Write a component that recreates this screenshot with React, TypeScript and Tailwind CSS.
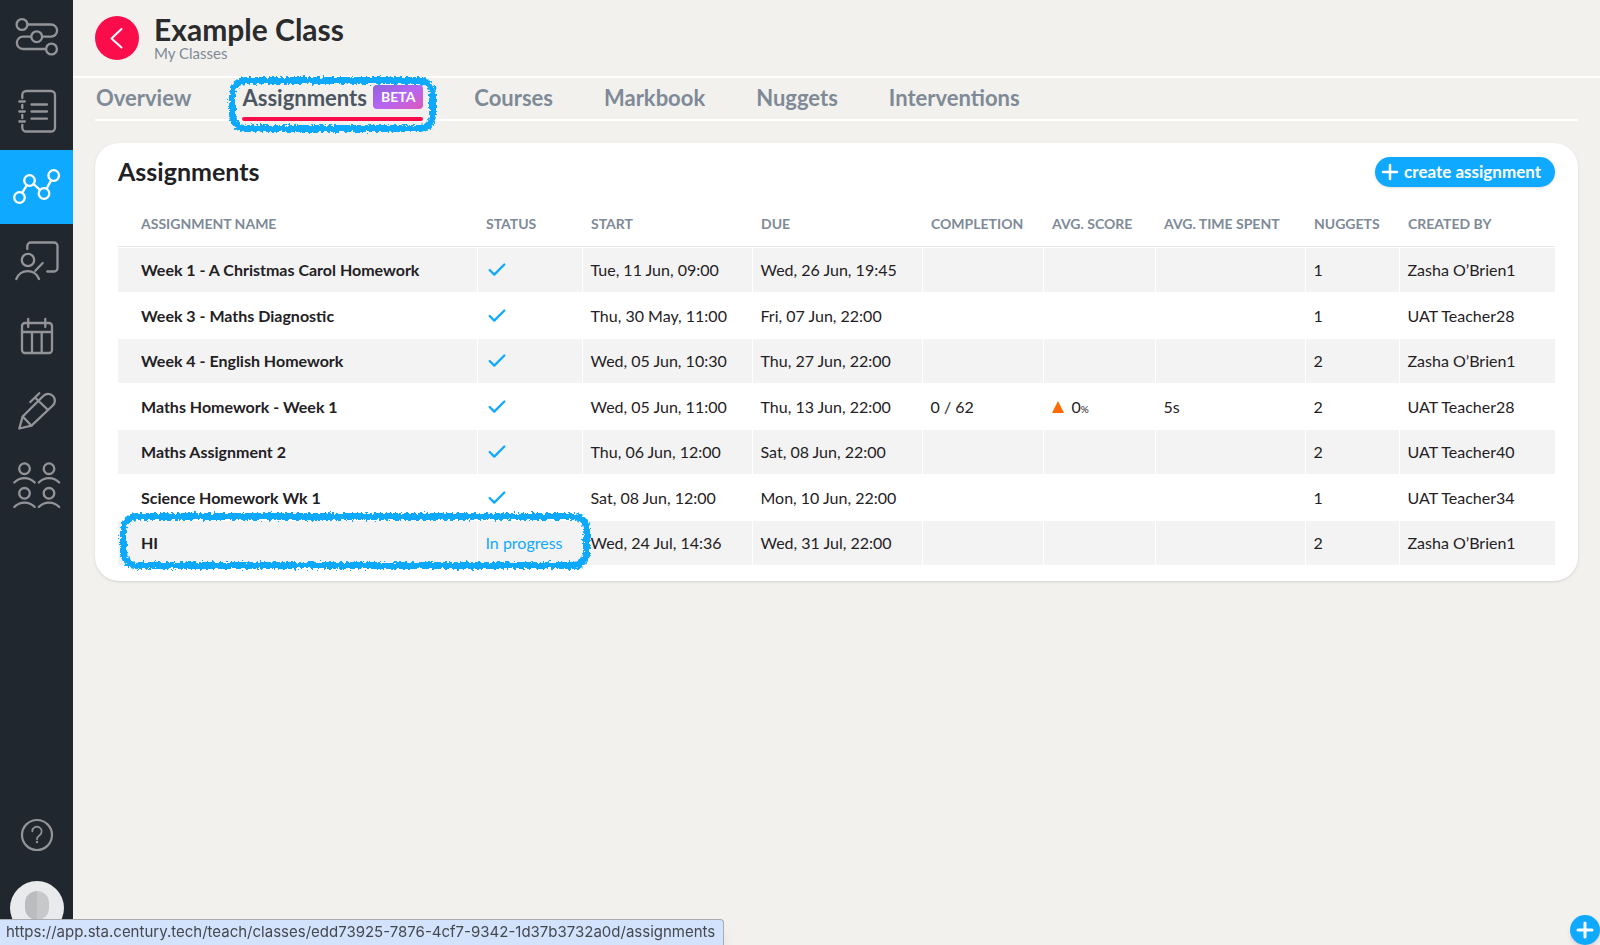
import React from 'react';
import { Check, Plus } from 'lucide-react';
import clsx from 'clsx';

interface Assignment {
  name: string;
  done: boolean;
  start: string;
  due: string;
  completion?: string;
  score?: number;
  time?: string;
  nuggets: number;
  author: string;
}

const ASSIGNMENTS: Assignment[] = [
  { name: 'Week 1 - A Christmas Carol Homework', done: true, start: 'Tue, 11 Jun, 09:00', due: 'Wed, 26 Jun, 19:45', nuggets: 1, author: 'Zasha O’Brien1' },
  { name: 'Week 3 - Maths Diagnostic', done: true, start: 'Thu, 30 May, 11:00', due: 'Fri, 07 Jun, 22:00', nuggets: 1, author: 'UAT Teacher28' },
  { name: 'Week 4 - English Homework', done: true, start: 'Wed, 05 Jun, 10:30', due: 'Thu, 27 Jun, 22:00', nuggets: 2, author: 'Zasha O’Brien1' },
  { name: 'Maths Homework - Week 1', done: true, start: 'Wed, 05 Jun, 11:00', due: 'Thu, 13 Jun, 22:00', completion: '0 / 62', score: 0, time: '5s', nuggets: 2, author: 'UAT Teacher28' },
  { name: 'Maths Assignment 2', done: true, start: 'Thu, 06 Jun, 12:00', due: 'Sat, 08 Jun, 22:00', nuggets: 2, author: 'UAT Teacher40' },
  { name: 'Science Homework Wk 1', done: true, start: 'Sat, 08 Jun, 12:00', due: 'Mon, 10 Jun, 22:00', nuggets: 1, author: 'UAT Teacher34' },
  { name: 'HI', done: false, start: 'Wed, 24 Jul, 14:36', due: 'Wed, 31 Jul, 22:00', nuggets: 2, author: 'Zasha O’Brien1' },
];

const COLUMNS = [
  { label: 'Assignment name', width: '' },
  { label: 'Status', width: 'w-[105px]' },
  { label: 'Start', width: 'w-[170px]' },
  { label: 'Due', width: 'w-[170px]' },
  { label: 'Completion', width: 'w-[121px]' },
  { label: 'Avg. score', width: 'w-[112px]' },
  { label: 'Avg. time spent', width: 'w-[150px]' },
  { label: 'Nuggets', width: 'w-[94px]' },
  { label: 'Created by', width: 'w-[156px]' },
];

const TABS = ['Overview', 'Assignments', 'Courses', 'Markbook', 'Nuggets', 'Interventions'];

// Each icon is drawn in a 74x74 box, the size of its navigation button.
const NAV = [
  {
    label: 'Pathways',
    icon: (
      <>
        <circle cx="22" cy="24.5" r="5.4" />
        <circle cx="36.7" cy="36.7" r="5.4" />
        <circle cx="51.5" cy="49" r="5.4" />
        <path d="M27.5 24.5H51a6.1 6.1 0 0 1 0 12.2h-8.8M31.2 36.7H23A6.1 6.1 0 0 0 23 49h23" />
      </>
    ),
  },
  {
    label: 'Courses',
    icon: (
      <>
        <path d="M22.3 23V20a4 4 0 0 1 4-4H51a4 4 0 0 1 4 4v32.5a4 4 0 0 1-4 4H26.3a4 4 0 0 1-4-4V50M22.3 30v3M22.3 40v3" />
        <path d="M19.3 26.5h5.5M19.3 36.5h5.5M19.3 46.5h5.5M31.5 29.5h15.5M31.5 36.5h15.5M31.5 43.7h15.5" />
      </>
    ),
  },
  {
    label: 'Classes',
    active: true,
    icon: (
      <>
        <circle cx="19.5" cy="47.5" r="5.3" />
        <circle cx="29.5" cy="30.5" r="5.3" />
        <circle cx="44" cy="43.5" r="5.3" />
        <circle cx="53.7" cy="25.5" r="5.3" />
        <path d="M22.3 42.7l4.4-7.4M33.6 34.2l6.3 5.6M46.6 38.6l4.5-8.2" />
      </>
    ),
  },
  {
    label: 'Teaching',
    icon: (
      <>
        <path d="M27.3 24v-3a3.5 3.5 0 0 1 3.5-3.5H54a3.5 3.5 0 0 1 3.5 3.5v22a3.5 3.5 0 0 1-3.5 3.5h-6.7" />
        <circle cx="28" cy="35" r="6.2" />
        <path d="M16.3 54a12.1 12.1 0 0 1 22.7 0M35.3 45.8l7.4-7.8" />
      </>
    ),
  },
  {
    label: 'Calendar',
    icon: (
      <>
        <rect x="22" y="23" width="30" height="30" rx="3" />
        <path d="M22 32h30M28.2 19v8M45.3 19v8M32 32v21M41.7 32v21" />
      </>
    ),
  },
  {
    label: 'Marking',
    icon: (
      <>
        <path d="M19.3 53.5L22.7 41.5L43.5 20.8a6.3 6.3 0 0 1 9.3 9.7L31.5 50.7Z" />
        <path d="M22.7 41.5l8.8 9.2M36 23.5l11 10.5M30.3 27l9-8.8" />
      </>
    ),
  },
  {
    label: 'Groups',
    icon: (
      <>
        <circle cx="24.5" cy="18.7" r="5.3" />
        <circle cx="49" cy="18.7" r="5.3" />
        <circle cx="24.5" cy="43.3" r="5.3" />
        <circle cx="49" cy="43.3" r="5.3" />
        <path d="M14.3 32.5a14 14 0 0 1 20.4 0M38.8 32.5a14 14 0 0 1 20.4 0M14.3 57a14 14 0 0 1 20.4 0M38.8 57a14 14 0 0 1 20.4 0" />
      </>
    ),
  },
];

const Sidebar: React.FC = () => (
  <aside className="sticky top-0 flex h-screen w-[73px] shrink-0 flex-col items-center bg-[#21272f] text-[#939498]">
    <nav className="flex w-full flex-col gap-px">
      {NAV.map((item) => (
        <button
          key={item.label}
          aria-label={item.label}
          className={clsx('flex h-[74px] w-full justify-center', item.active && 'bg-[#0fa9ff] text-white')}
        >
          <svg viewBox="0 0 74 74" className="h-[74px] w-[74px] shrink-0" fill="none" stroke="currentColor" strokeWidth="2.3" strokeLinecap="round" strokeLinejoin="round">
            {item.icon}
          </svg>
        </button>
      ))}
    </nav>
    <button aria-label="Help" className="mt-auto">
      <svg viewBox="0 0 34 34" className="h-[34px] w-[34px]" fill="none" stroke="currentColor" strokeWidth="2.2" strokeLinecap="round">
        <circle cx="17" cy="17" r="15" />
        <path d="M12.3 13.3a4.7 4.7 0 1 1 7.3 3.9c-1.8 1.2-2.6 2-2.6 4" strokeWidth="1.7" />
        <circle cx="17" cy="24" r="1.2" fill="currentColor" stroke="none" />
      </svg>
    </button>
    <button aria-label="Profile" className="mt-[29px] mb-[10px] flex h-[54px] w-[54px] shrink-0 justify-center rounded-full bg-[#e9eaec] pt-[10px]">
      <span className="flex h-[29px] w-6 overflow-hidden rounded-xl">
        <span className="flex-1 bg-[#bbbcbf]" />
        <span className="flex-1 bg-[#c7c8ca]" />
      </span>
    </button>
  </aside>
);

// Crayon-like outline laid over whatever it highlights
const Marker: React.FC<{ className: string }> = ({ className }) => (
  <span className={clsx('pointer-events-none absolute z-10 rounded-2xl border-7 border-[#0fa9ff] [filter:url(#crayon)]', className)} />
);

const Tabs: React.FC = () => (
  <nav className="mx-[22px] flex h-[43px] gap-[51px] border-b-2 border-white pl-px text-[22px] leading-7 font-bold text-[#7e8a97]">
    {TABS.map((tab) =>
      tab === 'Assignments' ? (
        <a key={tab} href="#assignments" className="relative flex h-[43px] items-start gap-[6px] pt-[6px] text-[#4b5663]">
          {tab}
          <span className="mt-px flex h-6 items-center rounded-sm bg-linear-to-br from-[#8e62db] via-[#b565f2] to-[#dd57bb] px-2 text-sm text-white">
            BETA
          </span>
          <span className="absolute inset-x-0 bottom-0 h-1 rounded-full bg-[#fb0d4c]" />
          <Marker className="-inset-x-[13px] -top-px -bottom-[11px]" />
        </a>
      ) : (
        <a key={tab} href={`#${tab.toLowerCase()}`} className="pt-[6px]">
          {tab}
        </a>
      )
    )}
  </nav>
);

const AssignmentTable: React.FC = () => (
  <table className="w-full table-fixed border-collapse text-left text-base text-[#1f2124]">
    <thead>
      <tr className="h-[44px] align-top text-sm text-[#7e8a97] uppercase">
        {COLUMNS.map((col, i) => (
          <th key={col.label} className={clsx('border-b border-[#e6e7e8] pt-3 font-bold whitespace-nowrap', col.width, i === 0 ? 'pl-[23px]' : 'pl-[9px]')}>
            {col.label}
          </th>
        ))}
      </tr>
    </thead>
    <tbody className="before:block before:h-px">
      {ASSIGNMENTS.map((row) => (
        <tr
          key={row.name}
          className="h-[45px] odd:bg-[#f3f3f3] even:h-[46px] [&>td]:border-b [&>td]:border-l [&>td]:border-white [&>td]:pl-2 [&>td:first-child]:border-l-0 [&>td:first-child]:pl-[23px]"
        >
          <td className="relative font-bold">
            {row.name}
            {!row.done && <Marker className="-top-2 -right-[113px] -bottom-1 left-[2px]" />}
          </td>
          <td>
            {row.done ? (
              <Check aria-label="Complete" className="h-[22px] w-[22px] text-[#0fa9ff]" strokeWidth={2.5} />
            ) : (
              <span className="text-[#0fa9ff]">In progress</span>
            )}
          </td>
          <td>{row.start}</td>
          <td>{row.due}</td>
          <td>{row.completion}</td>
          <td>
            {row.score !== undefined && (
              <span className="flex items-center gap-2">
                <svg viewBox="0 0 12 12" className="h-3 w-3 fill-[#ff6b00]">
                  <path d="M6 0l6 12H0z" />
                </svg>
                <span>
                  {row.score}
                  <span className="text-[10px]">%</span>
                </span>
              </span>
            )}
          </td>
          <td>{row.time}</td>
          <td>{row.nuggets}</td>
          <td>{row.author}</td>
        </tr>
      ))}
    </tbody>
  </table>
);

export default function App() {
  return (
    <div className="flex min-h-screen bg-[#f3f1ed] font-[Lato,'Open_Sans',sans-serif]">
      <svg className="absolute h-0 w-0" aria-hidden="true">
        <filter id="crayon">
          <feTurbulence type="fractalNoise" baseFrequency="0.35" numOctaves="2" seed="4" result="noise" />
          <feDisplacementMap in="SourceGraphic" in2="noise" scale="7" xChannelSelector="R" yChannelSelector="G" />
        </filter>
      </svg>
      <Sidebar />

      <main className="min-w-0 flex-1">
        <header className="flex h-[78px] items-start gap-[15px] border-b-2 border-white pt-4 pl-[22px]">
          <button aria-label="Back" className="flex h-[44px] w-[44px] items-center justify-center rounded-full bg-[#fb0d4c] text-white">
            <svg viewBox="0 0 24 24" className="h-6 w-6" fill="none" stroke="currentColor" strokeWidth="2" strokeLinecap="round" strokeLinejoin="round">
              <path d="M16.5 3l-10 9.5 10 9" />
            </svg>
          </button>
          <div>
            <h1 className="text-3xl leading-[26px] font-bold text-[#2a2b2d]">Example Class</h1>
            <p className="text-[15px] leading-[22px] text-[#7e8a97]">My Classes</p>
          </div>
        </header>

        <Tabs />

        <section className="mx-[22px] mt-[22px] rounded-3xl bg-white px-[23px] pt-[14px] pb-[15px] shadow-sm">
          <div className="mb-[15px] flex h-[30px] items-center justify-between">
            <h2 className="text-[25px] font-bold text-[#1f2124]">Assignments</h2>
            <button className="flex h-[30px] items-center gap-[2px] rounded-full bg-[#0fa9ff] pr-[14px] pl-[3px] text-[17px] font-bold text-white shadow-sm">
              <Plus className="h-6 w-6" strokeWidth={2.5} />
              create assignment
            </button>
          </div>
          <AssignmentTable />
        </section>
      </main>

      <button aria-label="Add" className="fixed right-0 bottom-0 flex h-[30px] w-[30px] items-center justify-center rounded-full bg-[#0fa9ff] text-white shadow-md">
        <Plus className="h-6 w-6" strokeWidth={3} />
      </button>
      <div className="fixed bottom-0 left-0 flex h-[26px] items-center rounded-tr border-t border-r border-[#a9abae] bg-[#d3e3fd] pr-2 pl-[6px] font-[Inter,sans-serif] text-[15px] text-[#45484c] shadow-lg">
        https://app.sta.century.tech/teach/classes/edd73925-7876-4cf7-9342-1d37b3732a0d/assignments
      </div>
    </div>
  );
}
